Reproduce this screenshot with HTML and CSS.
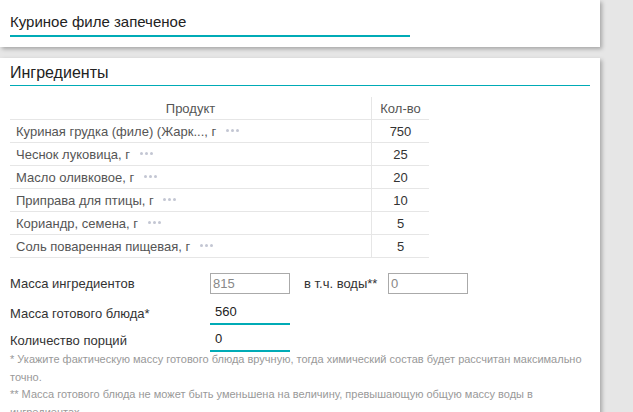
FILE: index.html
```html
<!DOCTYPE html>
<html lang="ru">
<head>
<meta charset="utf-8">
<link rel="stylesheet" href="styles.css">
</head>
<body>
<div class="page">
  <section class="card card-title">
    <div class="title-input">Куриное филе запеченое</div>
  </section>
  <section class="card card-main">
    <h2 class="section-head">Ингредиенты</h2>
    <table class="ing">
      <thead>
        <tr><th class="c-name">Продукт</th><th class="c-qty">Кол-во</th></tr>
      </thead>
      <tbody>
        <tr><td class="c-name">Куриная грудка (филе) (Жарк..., г <span class="dots"><i></i><i></i><i></i></span></td><td class="c-qty">750</td></tr>
        <tr><td class="c-name">Чеснок луковица, г <span class="dots"><i></i><i></i><i></i></span></td><td class="c-qty">25</td></tr>
        <tr><td class="c-name">Масло оливковое, г <span class="dots"><i></i><i></i><i></i></span></td><td class="c-qty">20</td></tr>
        <tr><td class="c-name">Приправа для птицы, г <span class="dots"><i></i><i></i><i></i></span></td><td class="c-qty">10</td></tr>
        <tr><td class="c-name">Кориандр, семена, г <span class="dots"><i></i><i></i><i></i></span></td><td class="c-qty">5</td></tr>
        <tr><td class="c-name">Соль поваренная пищевая, г <span class="dots"><i></i><i></i><i></i></span></td><td class="c-qty">5</td></tr>
      </tbody>
    </table>
    <div class="form">
      <div class="row row1">
        <span class="label">Масса ингредиентов</span>
        <span class="box">815</span>
        <span class="label2">в т.ч. воды**</span>
        <span class="box box-water">0</span>
      </div>
      <div class="row row2">
        <span class="label">Масса готового блюда*</span>
        <span class="line-input">560</span>
      </div>
      <div class="row row3">
        <span class="label">Количество порций</span>
        <span class="line-input">0</span>
      </div>
    </div>
    <div class="notes">
      <p>* Укажите фактическую массу готового блюда вручную, тогда химический состав будет рассчитан максимально точно.</p>
      <p>** Масса готового блюда не может быть уменьшена на величину, превышающую общую массу воды в ингредиентах.</p>
    </div>
  </section>
</div>
</body>
</html>
```
FILE: styles.css
```css
html, body {
  margin: 0;
  padding: 0;
  background: #e6e6e6;
  font-family: "Liberation Sans", Arial, sans-serif;
  overflow: hidden;
}
.page {
  width: 600px;
}
.card {
  background: #fff;
  box-shadow: 2px 2px 4px rgba(0, 0, 0, 0.28);
}
.card-title {
  height: 47px;
  padding: 12px 10px 0;
  box-sizing: border-box;
}
.title-input {
  width: 400px;
  font-size: 15px;
  line-height: 20px;
  color: #222;
  padding-bottom: 3px;
  border-bottom: 2px solid #00abb6;
}
.card-main {
  margin-top: 11px;
  padding: 5px 10px 20px;
  height: 400px;
  box-sizing: border-box;
}
.section-head {
  margin: 0;
  font-weight: normal;
  font-size: 16px;
  line-height: 20px;
  color: #222;
  padding-bottom: 2px;
  border-bottom: 1px solid #00abb6;
}
.ing {
  margin-top: 11px;
  border-collapse: collapse;
  width: 419px;
  font-size: 13px;
}
.ing th, .ing td {
  padding: 0 6px;
  height: 22px;
  border-bottom: 1px solid #e6e6e6;
  font-weight: normal;
  white-space: nowrap;
}
.ing th {
  color: #555;
}
.ing .c-name {
  width: 349px;
  text-align: left;
  color: #555;
}
.ing th.c-name {
  text-align: center;
}
.ing .c-qty {
  border-left: 1px solid #e6e6e6;
  text-align: center;
  color: #333;
  padding: 0;
}
.ing th.c-qty {
  color: #555;
}
.dots {
  display: inline-flex;
  gap: 2px;
  margin-left: 6px;
  vertical-align: middle;
  position: relative;
  top: -2px;
}
.dots i {
  width: 3px;
  height: 3px;
  border-radius: 50%;
  background: #c3c6d3;
}
.form {
  margin-top: 15px;
  font-size: 13px;
  color: #333;
}
.row {
  display: flex;
  align-items: center;
}
.label {
  width: 200px;
}
.box {
  width: 80px;
  height: 21px;
  box-sizing: border-box;
  border: 1px solid #aaa;
  line-height: 19px;
  padding-left: 2px;
  color: #888;
}
.label2 {
  margin-left: 14px;
  width: 84px;
}
.row2 {
  margin-top: 7px;
}
.row3 {
  margin-top: 3px;
}
.line-input {
  width: 80px;
  box-sizing: border-box;
  line-height: 22px;
  padding-left: 5px;
  border-bottom: 2px solid #00abb6;
  color: #222;
}
.notes {
  margin-top: -1px;
  font-size: 11px;
  line-height: 17.5px;
  color: #999;
}
.notes p {
  margin: 0;
}
```
